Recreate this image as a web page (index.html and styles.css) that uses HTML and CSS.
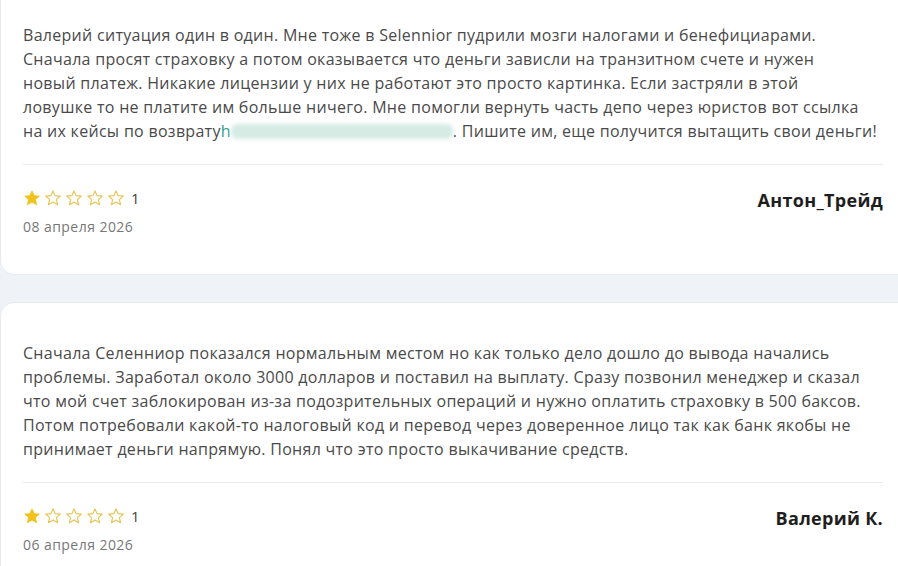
FILE: index.html
```html
<!DOCTYPE html>
<html lang="ru">
<head>
<meta charset="utf-8">
<title>Отзывы</title>
<link rel="stylesheet" href="styles.css">
</head>
<body>
<div class="reviews">
  <article class="card">
    <p class="text">Валерий ситуация один в один. Мне тоже в Selennior пудрили мозги налогами и бенефициарами.<br>Сначала просят страховку а потом оказывается что деньги зависли на транзитном счете и нужен<br>новый платеж. Никакие лицензии у них не работают это просто картинка. Если застряли в этой<br>ловушке то не платите им больше ничего. Мне помогли вернуть часть депо через юристов вот ссылка<br>на их кейсы по возврату<span class="link">h<span class="blur"></span></span>. Пишите им, еще получится вытащить свои деньги!</p>
    <div class="footer">
      <div class="meta">
        <div class="rating">
          <svg class="star" viewBox="0 0 24 24"><path class="on" d="M12 2.5l2.8 6.4 6.9.6-5.2 4.6 1.6 6.8L12 17.3l-6.1 3.6 1.6-6.8-5.2-4.6 6.9-.6z"/></svg>
          <svg class="star" viewBox="0 0 24 24"><path class="off" d="M12 2.5l2.8 6.4 6.9.6-5.2 4.6 1.6 6.8L12 17.3l-6.1 3.6 1.6-6.8-5.2-4.6 6.9-.6z"/></svg>
          <svg class="star" viewBox="0 0 24 24"><path class="off" d="M12 2.5l2.8 6.4 6.9.6-5.2 4.6 1.6 6.8L12 17.3l-6.1 3.6 1.6-6.8-5.2-4.6 6.9-.6z"/></svg>
          <svg class="star" viewBox="0 0 24 24"><path class="off" d="M12 2.5l2.8 6.4 6.9.6-5.2 4.6 1.6 6.8L12 17.3l-6.1 3.6 1.6-6.8-5.2-4.6 6.9-.6z"/></svg>
          <svg class="star" viewBox="0 0 24 24"><path class="off" d="M12 2.5l2.8 6.4 6.9.6-5.2 4.6 1.6 6.8L12 17.3l-6.1 3.6 1.6-6.8-5.2-4.6 6.9-.6z"/></svg>
          <span class="score">1</span>
        </div>
        <div class="date">08 апреля 2026</div>
      </div>
      <div class="author">Антон_Трейд</div>
    </div>
  </article>
  <article class="card">
    <p class="text">Сначала Селенниор показался нормальным местом но как только дело дошло до вывода начались<br>проблемы. Заработал около 3000 долларов и поставил на выплату. Сразу позвонил менеджер и сказал<br>что мой счет заблокирован из-за подозрительных операций и нужно оплатить страховку в 500 баксов.<br>Потом потребовали какой-то налоговый код и перевод через доверенное лицо так как банк якобы не<br>принимает деньги напрямую. Понял что это просто выкачивание средств.</p>
    <div class="footer">
      <div class="meta">
        <div class="rating">
          <svg class="star" viewBox="0 0 24 24"><path class="on" d="M12 2.5l2.8 6.4 6.9.6-5.2 4.6 1.6 6.8L12 17.3l-6.1 3.6 1.6-6.8-5.2-4.6 6.9-.6z"/></svg>
          <svg class="star" viewBox="0 0 24 24"><path class="off" d="M12 2.5l2.8 6.4 6.9.6-5.2 4.6 1.6 6.8L12 17.3l-6.1 3.6 1.6-6.8-5.2-4.6 6.9-.6z"/></svg>
          <svg class="star" viewBox="0 0 24 24"><path class="off" d="M12 2.5l2.8 6.4 6.9.6-5.2 4.6 1.6 6.8L12 17.3l-6.1 3.6 1.6-6.8-5.2-4.6 6.9-.6z"/></svg>
          <svg class="star" viewBox="0 0 24 24"><path class="off" d="M12 2.5l2.8 6.4 6.9.6-5.2 4.6 1.6 6.8L12 17.3l-6.1 3.6 1.6-6.8-5.2-4.6 6.9-.6z"/></svg>
          <svg class="star" viewBox="0 0 24 24"><path class="off" d="M12 2.5l2.8 6.4 6.9.6-5.2 4.6 1.6 6.8L12 17.3l-6.1 3.6 1.6-6.8-5.2-4.6 6.9-.6z"/></svg>
          <span class="score">1</span>
        </div>
        <div class="date">06 апреля 2026</div>
      </div>
      <div class="author">Валерий К.</div>
    </div>
  </article>
</div>
</body>
</html>
```
FILE: styles.css
```css
html, body {
  margin: 0;
  padding: 0;
}
body {
  background: #eff3f8;
  overflow: hidden;
  font-family: "Open Sans", "Noto Sans", sans-serif;
  color: #4a4a4a;
}
.reviews {
  display: flex;
  flex-direction: column;
  gap: 27px;
  margin-top: -16px;
  margin-right: -14px;
}
.card {
  background: #fff;
  border: 1px solid #e5eaf0;
  border-radius: 14px;
  padding: 38px 28px 37px 22px;
}
.text {
  margin: 0;
  font-size: 16px;
  line-height: 24px;
  letter-spacing: 0.29px;
  white-space: nowrap;
  padding-bottom: 21px;
  border-bottom: 1px solid #e9ecef;
}
.link {
  color: #2a9d8f;
}
.blur {
  display: inline-block;
  width: 222px;
  height: 15px;
  vertical-align: -2px;
  background: #d5ebe3;
  filter: blur(2px);
  border-radius: 6px;
}
.footer {
  display: flex;
  justify-content: space-between;
  align-items: flex-start;
  padding-top: 23px;
}
.meta {
  display: flex;
  flex-direction: column;
  gap: 9px;
}
.rating {
  display: flex;
  align-items: center;
  gap: 3px;
  height: 20px;
}
.star {
  width: 18px;
  height: 18px;
}
.star .on {
  fill: #f0c21b;
  stroke: #f0c21b;
  stroke-width: 1.2;
  stroke-linejoin: round;
}
.star .off {
  fill: none;
  stroke: #e6c453;
  stroke-width: 1.5;
  stroke-linejoin: round;
}
.score {
  margin-left: 3px;
  font-size: 15px;
  color: #444;
}
.date {
  font-size: 14px;
  line-height: 20px;
  letter-spacing: 0.45px;
  color: #777;
}
.author {
  font-size: 18px;
  line-height: 24px;
  font-weight: 700;
  letter-spacing: 0.3px;
  color: #1e1e1e;
}
```
